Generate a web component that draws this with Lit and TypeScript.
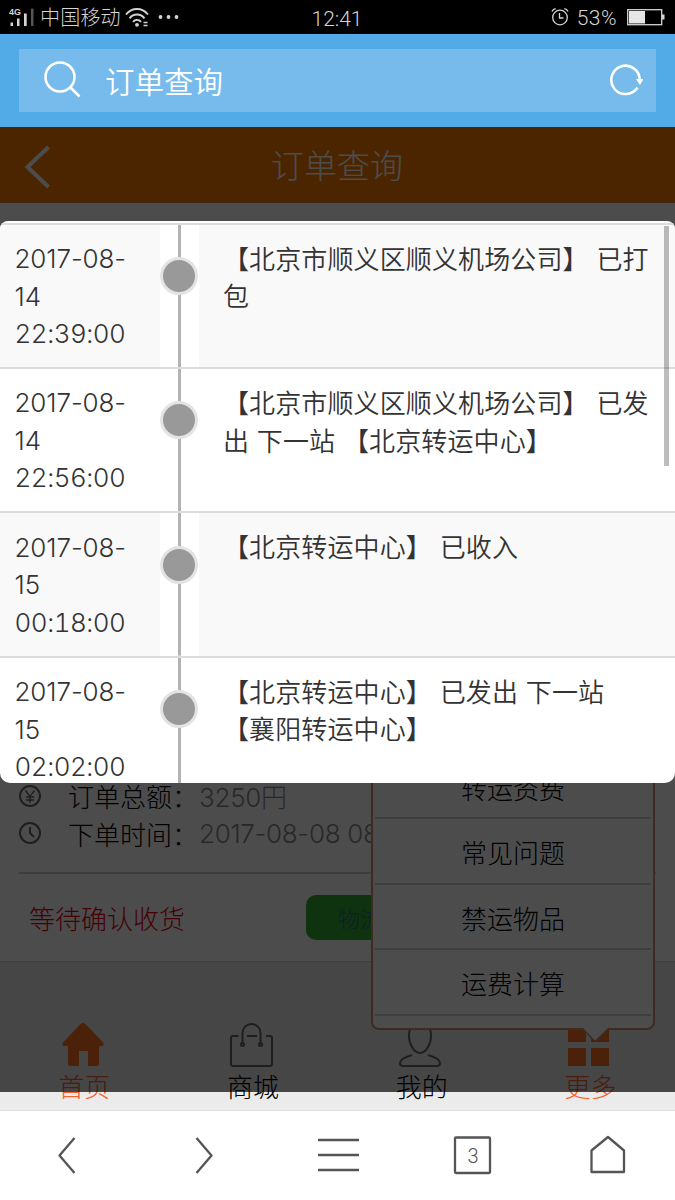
import { LitElement, html, css, svg } from "lit";
import { customElement } from "lit/decorators.js";

interface TrackEvent { date: string; time: string; text: string; }

const EVENTS: TrackEvent[] = [
  { date: "2017-08-14", time: "22:39:00", text: "【北京市顺义区顺义机场公司】 已打包" },
  { date: "2017-08-14", time: "22:56:00", text: "【北京市顺义区顺义机场公司】 已发出 下一站 【北京转运中心】" },
  { date: "2017-08-15", time: "00:18:00", text: "【北京转运中心】 已收入" },
  { date: "2017-08-15", time: "02:02:00", text: "【北京转运中心】 已发出 下一站 【襄阳转运中心】" },
];

const MENU = ["转运资费", "常见问题", "禁运物品", "运费计算"];

@customElement("status-bar")
class StatusBar extends LitElement {
  static styles = css`
    :host { display: flex; align-items: center; height: 34px; background: #000; color: #d4d4d4; box-sizing: border-box; padding: 0 10px 0 9px; }
    .side { flex: 1; display: flex; align-items: center; }
    .right { justify-content: flex-end; }
    .carrier { font-size: 20px; margin: -1px 4px 0 5px; letter-spacing: 0.2px; line-height: 30px; }
    .clock { font-size: 21px; font-family: "Roboto", sans-serif; font-weight: 300; padding-top: 3px; }
    .pct { font-size: 21px; margin: 1px 10px 0 8px; letter-spacing: 0.500px; font-family: "Roboto", sans-serif; font-weight: 300; }
    svg { display: block; }
    .four { font: bold 9px "Liberation Sans", sans-serif; }
  `;
  render() {
    return html`
      <div class="side">
        <svg width="26" height="22" viewBox="0 0 26 22" fill="#d4d4d4">
          <text class="four" x="0" y="9">4G</text>
          <path d="M1.500 16.500H4V20H1.500zM8 12.500h2.500V20H8zM15 7.500h2.700V20H15z" />
          <path d="M22 2.500h2.500V20H22z" fill="#555" />
        </svg>
        <span class="carrier">中国移动</span>
        <svg width="24" height="22" viewBox="0 0 24 22" fill="none" stroke="#d4d4d4" stroke-width="1.900">
          <path d="M1 8.500C7 1.200 17 1.200 23 8.500M4.500 12.300c4-5 11-5 15 0M8 15.800c2-2.600 6-2.600 8 0" />
          <circle cx="12" cy="18.800" r="1.900" fill="#d4d4d4" stroke="none" />
          <path d="M18.500 16.500h4M18.500 19.500h4" stroke-width="1.400" />
        </svg>
        <svg width="32" height="6" viewBox="0 0 32 6" fill="#d4d4d4">
          <circle cx="11.500" cy="3" r="1.900" /><circle cx="19.500" cy="3" r="1.900" /><circle cx="27.500" cy="3" r="1.900" />
        </svg>
      </div>
      <span class="clock">12:41</span>
      <div class="side right">
        <svg width="18" height="20" viewBox="0 0 18 20" fill="none" stroke="#d4d4d4" stroke-width="1.300">
          <circle cx="9" cy="10.500" r="7.300" /><path d="M8.500 6v5h4M1 4.600Q2 2 4.700 1.600M17 4.600Q16 2 13.300 1.600" />
        </svg>
        <span class="pct">53%</span>
        <svg width="38" height="17" viewBox="0 0 38 17">
          <rect x="0.700" y="0.700" width="34" height="15" fill="none" stroke="#d4d4d4" stroke-width="1.300" />
          <path d="M2 2h16v12.500H2z" fill="#e6e6e6" /><path d="M35 5.500h2.500v5H35z" fill="#d4d4d4" />
        </svg>
      </div>`;
  }
}

@customElement("search-bar")
class SearchBar extends LitElement {
  static styles = css`
    :host { display: block; height: 93px; padding: 15px 19px; box-sizing: border-box; background: #52abe7; }
    .box { height: 63px; box-sizing: border-box; background: #76bbeb; display: flex; align-items: center; padding: 0 13px 2px 25px; color: #fff; }
    .label { flex: 1; font-size: 29.500px; margin-left: 23px; font-weight: 350; }
    svg { display: block; }
  `;
  render() {
    return html`<div class="box">
      <svg width="38" height="38" viewBox="0 0 38 38" fill="none" stroke="#fff" stroke-width="2.500"><circle cx="16" cy="16" r="14.500" /><path d="M26.500 26.500l9 9" /></svg>
      <span class="label">订单查询</span>
      <svg width="34" height="34" viewBox="0 0 34 34" fill="none" stroke="#fff" stroke-width="2.500"><path d="M28.500 24.500A14.200 14.200 0 1 1 30.700 17" /><path d="M27 16h7.500l-3.500 6z" fill="#fff" stroke="none" /></svg>
    </div>`;
  }
}

@customElement("order-page")
class OrderPage extends LitElement {
  static styles = css`
    :host { display: flex; flex-direction: column; position: relative; height: 983px; background: #ebebeb; overflow: hidden; }
    .head { height: 75px; flex: none; background: #fb7a00; color: #fff; display: grid; grid-template-columns: 75px 1fr 75px; align-items: center; border-bottom: 1px solid #d9834f; }
    .head span { text-align: center; font-size: 33px; padding: 0 1px 1px 0; }
    .head svg { margin-left: 24px; margin-top: 5px; }
    .card { flex: none; height: 759px; background: #fff; box-sizing: border-box; padding: 0 19px; display: flex; flex-direction: column; justify-content: flex-end; border-bottom: 1px solid #d4d4d4; font-size: 26px; }
    .row { display: flex; align-items: center; height: 37.500px; color: #000; }
    .row svg { flex: none; margin-right: 27px; }
    .val { color: #888; letter-spacing: -0.300px; font-family: "Inter", "Noto Sans CJK SC", sans-serif; font-weight: 300; margin-left: 1px; }
    .foot { display: flex; justify-content: space-between; align-items: center; height: 87px; border-top: 2px solid #ccc; margin-top: 20px; padding-left: 10px; }
    .state { color: #e60012; }
    .btn { width: 146px; height: 45px; line-height: 44px; border-radius: 10px; background: #33a833; color: #2c6690; font-size: 22px; text-align: left; box-sizing: border-box; padding-left: 32px; margin-right: 204px; }
    .tabs { margin-top: auto; display: grid; grid-template-columns: repeat(4, 1fr); height: 91px; color: #000; font-size: 26px; }
    .tab { display: flex; flex-direction: column; align-items: center; line-height: 38px; }
    .tab svg { height: 46px; width: 44px; margin: 2px 3px 0 0; flex: none; }
    .on { color: #fa6130; }
    .menu { position: absolute; left: 371px; top: 590px; width: 284px; height: 313px; box-sizing: border-box; border: 2px solid #cb8e72; border-radius: 8px; background: #fff; padding: 0 2px; font-size: 26px; color: #000; }
    .item { height: 65.600px; line-height: 65px; box-sizing: border-box; border-bottom: 2px solid #d0d0d0; text-align: center; }
    .item:first-child { height: 100px; padding-top: 36px; }
    .menu .tip { position: absolute; left: 208px; bottom: -15px; display: block; }
    .shade { position: absolute; left: 0; right: 0; top: 0; height: 965px; background: rgba(0, 0, 0, 0.7); }
  `;
  render() {
    return html`
      <div class="head">
        <svg width="28" height="44" viewBox="0 0 28 44" fill="none" stroke="#fff" stroke-width="4"><path d="M24.500 2L3.500 22l21 20" /></svg>
        <span>订单查询</span>
      </div>
      <div class="card">
        <div class="row">
          <svg width="22" height="24" viewBox="0 0 22 24" fill="none" stroke="#666" stroke-width="2"><circle cx="11" cy="12" r="10" /><path d="M6.500 6.500l4.500 6 4.500-6M11 12.500V19M7 13h8M7 16h8" stroke-width="1.300" /></svg>
          <span>订单总额：</span><span class="val">3250円</span>
        </div>
        <div class="row">
          <svg width="22" height="24" viewBox="0 0 22 24" fill="none" stroke="#666" stroke-width="2"><circle cx="11" cy="12" r="10" /><path d="M11 6v6l4 4" /></svg>
          <span>下单时间：</span><span class="val">2017-08-08 08</span>
        </div>
        <div class="foot"><span class="state">等待确认收货</span><span class="btn">物流</span></div>
      </div>
      <div class="tabs">
        <div class="tab on">
          <svg viewBox="0 0 44 46" fill="#fb7020"><path d="M22 2q1.500 0 3 1.500L42 21.500q1.500 3.500-1 3.500H38v18q0 2-2 2h-9V30h-9v15H9q-2 0-2-2V25H3q-2.500 0-1-3.500L19 3.500Q20.500 2 22 2z" /></svg><span>首页</span>
        </div>
        <div class="tab">
          <svg viewBox="0 0 44 46" fill="none" stroke="#666" stroke-width="2"><path d="M8.500 15H3q-2 0-2 2v26q0 2 2 2h37q2 0 2-2V17q0-2-2-2h-4M17 15h10M12.500 23V12a9 9 0 0 1 18 0v11" /><circle cx="12.500" cy="23.500" r="1.500" /><circle cx="30.500" cy="23.500" r="1.500" /></svg><span>商城</span>
        </div>
        <div class="tab">
          <svg viewBox="0 0 44 46" fill="none" stroke="#666" stroke-width="2"><path d="M22 2c-7 0-11 5-11 13s5 17 11 17 11-9 11-17S29 2 22 2zM14 34C7 36 2 38 2 42q0 3 3 3h34q3 0 3-3c0-4-5-6-12-8" /></svg><span>我的</span>
        </div>
        <div class="tab on">
          <svg viewBox="0 0 44 46" fill="#fb7020"><path d="M1 3h18v18H1zM24 3h18v18H24zM1 27h18v18H1zM24 27h18v18H24z" /></svg><span>更多</span>
        </div>
      </div>
      <div class="menu">
        ${MENU.map((m) => html`<div class="item">${m}</div>`)}
        <svg class="tip" width="30" height="16" viewBox="0 0 30 16"><path d="M1 0v1l13 13.500L28 1V0z" fill="#fff" /><path d="M1 1l13 13.500L28 1" fill="none" stroke="#cb8e72" stroke-width="1.500" /></svg>
      </div>
      <div class="shade"></div>`;
  }
}

@customElement("track-dialog")
class TrackDialog extends LitElement {
  static styles = css`
    :host { display: block; position: absolute; left: 0; top: 221px; width: 675px; height: 562px; background: #fff; border-radius: 8px 8px 10px 10px; overflow: hidden; box-sizing: border-box; padding-top: 1.500px; font-size: 26px; line-height: 37.500px; color: #333; }
    .row { display: grid; grid-template-columns: 160px 39px 1fr; height: 144.400px; box-sizing: border-box; border-top: 2px solid #dcdcdc; }
    .row:nth-child(odd) .cell { background: #f9f9f9; }
    .cell { padding-top: 14.200px; }
    .when { padding-left: 14.500px; padding-right: 20px; letter-spacing: -0.100px; font-family: "Inter", sans-serif; font-weight: 300; padding-top: 15.500px; }
    .time { display: block; letter-spacing: -0.500px; font-feature-settings: "tnum"; }
    .what { padding-left: 24px; padding-right: 21px; word-spacing: 1.800px; letter-spacing: 0.120px; font-weight: 350; }
    .rail { display: flex; justify-content: center; padding-right: 1px; background: linear-gradient(#b3b3b3, #b3b3b3) center / 3px 100% no-repeat content-box; }
    .dot { width: 32px; height: 32px; border-radius: 50%; background: #999; border: 3px solid #e3e3e3; margin-top: 32.500px; }
    .bar { position: absolute; right: 6px; top: 5px; width: 5px; height: 240px; background: rgba(0, 0, 0, 0.26); }
  `;
  render() {
    return html`${EVENTS.map((e) => html`<div class="row">
        <div class="cell when">${e.date} <span class="time">${e.time}</span></div>
        <div class="rail"><div class="dot"></div></div>
        <div class="cell what">${e.text}</div>
      </div>`)}<div class="bar"></div>`;
  }
}

@customElement("browser-bar")
class BrowserBar extends LitElement {
  static styles = css`
    :host { display: grid; grid-template-columns: repeat(5, 1fr); height: 90px; background: #fff; place-items: center; box-sizing: border-box; border-top: 1px solid #e0e0e0; }
    svg { display: block; }
    .n { font: 300 20px "Roboto", sans-serif; fill: #555; }
  `;
  icon(body: unknown) {
    return html`<svg width="44" height="44" viewBox="0 0 44 44" fill="none" stroke="#555" stroke-width="2.300" stroke-linejoin="round">${body}</svg>`;
  }
  render() {
    return html`
      ${this.icon(svg`<path d="M28.500 4L13.500 21.500l15 17.500" />`)}
      ${this.icon(svg`<path d="M15.500 4l15 17.500-15 17.500" />`)}
      ${this.icon(svg`<path d="M2 6h41M2 21h41M2 36h41" />`)}
      ${this.icon(svg`<rect x="4" y="3.500" width="35" height="35.500" rx="1" /><text class="n" x="22" y="28.500" text-anchor="middle" stroke="none">3</text>`)}
      ${this.icon(svg`<path d="M5.500 16.500L22 3l16 13.500V38H5.500z" />`)}`;
  }
}

@customElement("app-root")
class AppRoot extends LitElement {
  static styles = css`
    :host { display: flex; flex-direction: column; position: relative; width: 675px; height: 1200px; overflow: hidden; font-family: "Noto Sans CJK SC", sans-serif; font-weight: 300; }
  `;
  render() {
    return html`<status-bar></status-bar><search-bar></search-bar><order-page></order-page><browser-bar></browser-bar><track-dialog></track-dialog>`;
  }
}
